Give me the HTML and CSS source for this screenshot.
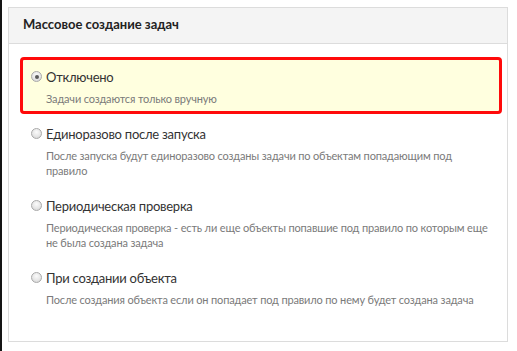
FILE: index.html
```html
<!DOCTYPE html>
<html lang="ru">
<head>
<meta charset="utf-8">
<title>Массовое создание задач</title>
<link rel="stylesheet" href="styles.css">
</head>
<body>
<div class="edge"></div>
<section class="panel">
  <header class="panel-head">Массовое создание задач</header>
  <div class="panel-body">
    <label class="option option-active">
      <span class="option-row"><span class="radio radio-checked"></span><span class="option-label">Отключено</span></span>
      <span class="option-desc">Задачи создаются только вручную</span>
    </label>
    <label class="option">
      <span class="option-row"><span class="radio"></span><span class="option-label">Единоразово после запуска</span></span>
      <span class="option-desc">После запуска будут единоразово созданы задачи по объектам попадающим под правило</span>
    </label>
    <label class="option">
      <span class="option-row"><span class="radio"></span><span class="option-label">Периодическая проверка</span></span>
      <span class="option-desc">Периодическая проверка - есть ли еще объекты попавшие под правило по которым еще не была создана задача</span>
    </label>
    <label class="option">
      <span class="option-row"><span class="radio"></span><span class="option-label">При создании объекта</span></span>
      <span class="option-desc">После создания объекта если он попадает под правило по нему будет создана задача</span>
    </label>
  </div>
</section>
</body>
</html>
```
FILE: styles.css
```css
html, body {
  margin: 0;
  padding: 0;
  background: #ffffff;
}
body {
  font-family: Lato, Roboto, "Liberation Sans", sans-serif;
  padding: 7px 0 0 8px;
  position: relative;
  height: 344px;
}
.edge {
  position: absolute;
  left: 0;
  top: 0;
  width: 2px;
  height: 351px;
  background: #151515;
}
.panel {
  width: 500px;
  box-sizing: border-box;
  border: 1px solid #dcdcdc;
  background: #ffffff;
}
.panel-head {
  background: #f4f4f4;
  border-bottom: 1px solid #dcdcdc;
  padding: 6px 14px 9px;
  font-size: 13px;
  line-height: 20px;
  font-weight: 700;
  color: #222222;
}
.panel-body {
  padding: 13px 5px 26px 11px;
}
.option {
  display: block;
  border: 3px solid transparent;
  border-radius: 4px;
  padding: 8px 8px 6px 8px;
}
.option-active {
  border-color: #ff0a0a;
  background: #ffffdf;
}
.option-row {
  display: flex;
  align-items: flex-start;
  height: 18px;
}
.radio {
  width: 11px;
  height: 11px;
  box-sizing: border-box;
  border-radius: 50%;
  border: 1px solid #a9a9a9;
  background: radial-gradient(circle at 50% 35%, #fbfbfb 0%, #e6e6e6 55%, #cfcfcf 100%);
  margin-top: 3px;
  margin-right: 4px;
  flex: none;
  position: relative;
}
.radio-checked::after {
  content: "";
  position: absolute;
  left: 2.5px;
  top: 2.5px;
  width: 4px;
  height: 4px;
  border-radius: 50%;
  background: #5a5a5a;
}
.option-label {
  font-size: 13px;
  line-height: 18px;
  letter-spacing: -0.25px;
  color: #333333;
}
.option-desc {
  display: block;
  margin-top: 5px;
  margin-bottom: -1px;
  padding-left: 15px;
  font-size: 11px;
  line-height: 15px;
  letter-spacing: -0.15px;
  color: #7a7a7a;
}
```
